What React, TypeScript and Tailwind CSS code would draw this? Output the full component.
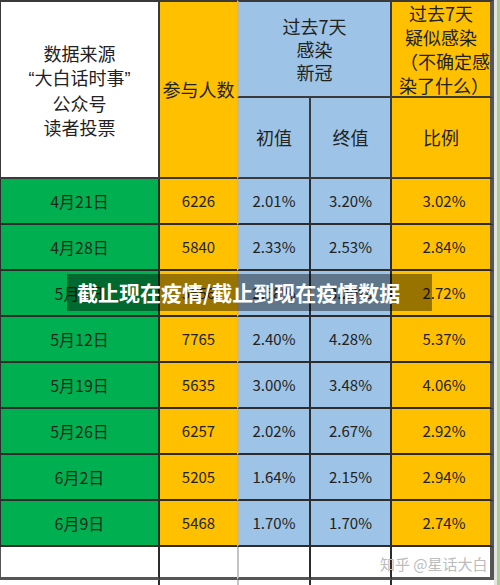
const rows = [
  ['4月21日', '6226', '2.01%', '3.20%', '3.02%'],
  ['4月28日', '5840', '2.33%', '2.53%', '2.84%'],
  ['5月5日', '5656', '2.58%', '3.29%', '2.72%'],
  ['5月12日', '7765', '2.40%', '4.28%', '5.37%'],
  ['5月19日', '5635', '3.00%', '3.48%', '4.06%'],
  ['5月26日', '6257', '2.02%', '2.67%', '2.92%'],
  ['6月2日', '5205', '1.64%', '2.15%', '2.94%'],
  ['6月9日', '5468', '1.70%', '1.70%', '2.74%'],
]

export default function App() {
  return (
    <div className="relative w-[500px] h-[585px] overflow-hidden bg-white font-['Noto_Sans_CJK_SC',sans-serif] text-[#222]">
      <div className="grid grid-cols-[160px_77px_74px_81px_102px_6px] grid-rows-[98px_81px_repeat(8,46px)_33px_5px]">
        {/* right edge strip */}
        <div className="col-start-6 row-start-1 row-span-full flex">
          <div className="w-[3px] bg-[#e4e4e4]" />
          <div className="flex-1 bg-[#a9d18e]" />
        </div>

        {/* header row 1 */}
        <div className="row-span-2 flex flex-col items-center justify-center bg-white border-t-2 border-l border-r-2 border-b-2 border-[#3a3a3a] text-[18px] leading-[24px]">
          <span>数据来源</span>
          <span>
            <span className="font-['Liberation_Sans',sans-serif]">“</span>大白话时事
            <span className="font-['Liberation_Sans',sans-serif]">”</span>
          </span>
          <span>公众号</span>
          <span>读者投票</span>
        </div>
        <div className="row-span-2 flex items-center justify-center bg-[#ffc000] border-t-2 border-b-2 border-[#3a3a3a] text-[18px]">
          <span className="whitespace-nowrap">参与人数</span>
        </div>
        <div className="col-span-2 flex flex-col items-center justify-center bg-[#9dc3e6] border-t-2 border-l-2 border-r-2 border-b-2 border-[#3a3a3a] border-l-[#b9b9a8] text-[18px] leading-[23px]">
          <span>过去7天</span>
          <span>感染</span>
          <span>新冠</span>
        </div>
        <div className="flex flex-col items-center justify-center overflow-hidden whitespace-nowrap bg-[#ffc000] border-t-2 border-b-2 border-r-4 border-[#3a3a3a] border-r-[#555] text-[18px] leading-[24px]">
          <span>过去7天</span>
          <span>疑似感染</span>
          <span className="pl-[8px]">（不确定感</span>
          <span className="pl-[6px]">染了什么）</span>
        </div>

        {/* header row 2 */}
        <div className="flex items-center justify-center bg-[#9dc3e6] border-l-2 border-r-2 border-b-2 border-[#3a3a3a] border-l-[#b9b9a8] text-[18px]">
          初值
        </div>
        <div className="flex items-center justify-center bg-[#9dc3e6] border-r-2 border-b-2 border-[#3a3a3a] text-[18px]">
          终值
        </div>
        <div className="flex items-center justify-center bg-[#ffc000] border-r-4 border-b-2 border-[#3a3a3a] border-r-[#555] text-[18px]">
          比例
        </div>

        {/* data */}
        {rows.map((r) => (
          <div key={r[0]} className="contents">
            <div className="flex items-center justify-center bg-[#00b050] border-l border-r-2 border-b-2 border-[#2c2c2c] text-[16px] text-[#1b2a1b]">
              {r[0]}
            </div>
            <div className="flex items-center justify-center bg-[#ffc000] border-b-2 border-[#2c2c2c] text-[15px]">
              {r[1]}
            </div>
            <div className="flex items-center justify-center bg-[#9dc3e6] border-l-2 border-r-2 border-b-2 border-[#2c2c2c] border-l-[#b9b9a8] text-[15px]">
              {r[2]}
            </div>
            <div className="flex items-center justify-center bg-[#9dc3e6] border-r-2 border-b-2 border-[#2c2c2c] text-[15px]">
              {r[3]}
            </div>
            <div className="flex items-center justify-center pl-[6px] bg-[#ffc000] border-r-4 border-b-2 border-[#2c2c2c] border-r-[#555] text-[15px]">
              {r[4]}
            </div>
          </div>
        ))}

        {/* empty white row */}
        <div className="bg-white border-l border-r-2 border-b-[3px] border-[#555] border-r-[#2c2c2c]" />
        <div className="bg-white border-b-[3px] border-[#555]" />
        <div className="bg-white border-l-2 border-r-2 border-b-[3px] border-[#555] border-l-[#c4c4c4] border-r-[#2c2c2c]" />
        <div className="bg-white border-r-2 border-b-[3px] border-[#555] border-r-[#2c2c2c]" />
        <div className="bg-white border-r-4 border-b-[3px] border-[#555]" />

        {/* bottom sliver */}
        <div className="bg-white border-r-2 border-[#2c2c2c]" />
        <div className="bg-white" />
        <div className="bg-white border-l-2 border-r-2 border-[#2c2c2c] border-l-[#c4c4c4]" />
        <div className="bg-white border-r-2 border-[#2c2c2c]" />
        <div className="bg-white" />
      </div>

      {/* caption overlay */}
      <div className="absolute left-[67px] top-[274px] w-[365px] h-[37px] flex items-center pl-[10px] bg-black/40 text-white font-bold text-[21px] whitespace-nowrap">
        截止现在疫情/截止到现在疫情数据
      </div>

      {/* watermark */}
      <div className="absolute left-[380px] top-[553px] text-[15px] text-[#bcbcbc] whitespace-nowrap">
        知乎 @星话大白
      </div>
    </div>
  )
}
